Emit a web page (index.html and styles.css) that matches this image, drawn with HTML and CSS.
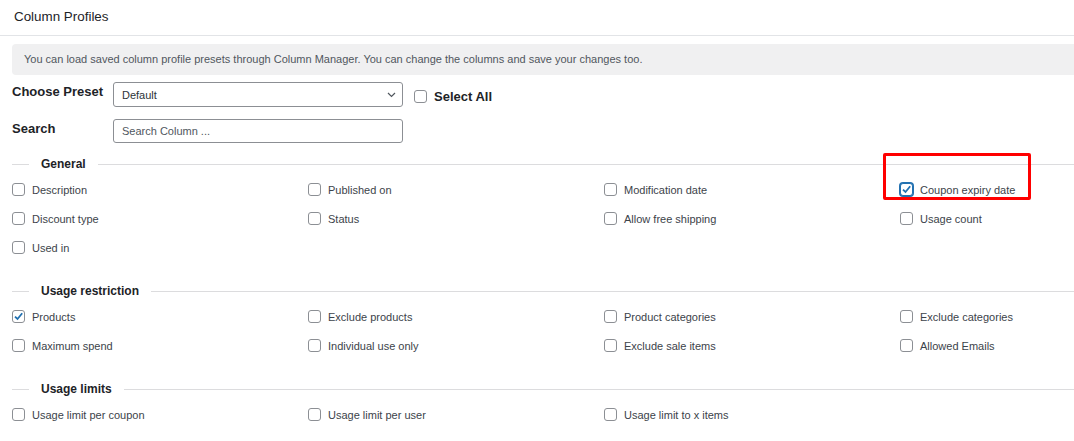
FILE: index.html
```html
<!DOCTYPE html>
<html>
<head>
<meta charset="utf-8">
<link rel="stylesheet" href="styles.css">
</head>
<body>
<div class="header">Column Profiles</div>
<div class="content">
  <div class="notice">You can load saved column profile presets through Column Manager. You can change the columns and save your changes too.</div>
  <div class="form-row">
    <div class="form-label">Choose Preset</div>
    <div class="select">
      <span>Default</span>
      <svg class="chev" width="9" height="6" viewBox="0 0 9 6"><path d="M1 1 L4.5 4.5 L8 1" fill="none" stroke="#50575e" stroke-width="1.2"/></svg>
    </div>
    <label class="select-all"><span class="cb"></span><span>Select All</span></label>
  </div>
  <div class="form-row second">
    <div class="form-label">Search</div>
    <div class="input">Search Column ...</div>
  </div>

  <div class="section first">
    <div class="sec-head"><span class="line short"></span><span class="sec-title">General</span><span class="line long"></span></div>
    <div class="grid">
      <label class="item"><span class="cb"></span>Description</label>
      <label class="item"><span class="cb"></span>Published on</label>
      <label class="item"><span class="cb"></span>Modification date</label>
      <label class="item marked"><span class="cb checked focus"><svg width="11" height="11" viewBox="0 0 11 11"><path d="M2 5.6 L4.5 8 L9.2 2.2" fill="none" stroke="#2271b1" stroke-width="1.8"/></svg></span>Coupon expiry date<span class="highlight"></span></label>
      <label class="item"><span class="cb"></span>Discount type</label>
      <label class="item"><span class="cb"></span>Status</label>
      <label class="item"><span class="cb"></span>Allow free shipping</label>
      <label class="item"><span class="cb"></span>Usage count</label>
      <label class="item"><span class="cb"></span>Used in</label>
    </div>
  </div>

  <div class="section">
    <div class="sec-head"><span class="line short"></span><span class="sec-title">Usage restriction</span><span class="line long"></span></div>
    <div class="grid">
      <label class="item"><span class="cb checked"><svg width="11" height="11" viewBox="0 0 11 11"><path d="M2 5.6 L4.5 8 L9.2 2.2" fill="none" stroke="#2271b1" stroke-width="1.8"/></svg></span>Products</label>
      <label class="item"><span class="cb"></span>Exclude products</label>
      <label class="item"><span class="cb"></span>Product categories</label>
      <label class="item"><span class="cb"></span>Exclude categories</label>
      <label class="item"><span class="cb"></span>Maximum spend</label>
      <label class="item"><span class="cb"></span>Individual use only</label>
      <label class="item"><span class="cb"></span>Exclude sale items</label>
      <label class="item"><span class="cb"></span>Allowed Emails</label>
    </div>
  </div>

  <div class="section">
    <div class="sec-head"><span class="line short"></span><span class="sec-title">Usage limits</span><span class="line long"></span></div>
    <div class="grid">
      <label class="item"><span class="cb"></span>Usage limit per coupon</label>
      <label class="item"><span class="cb"></span>Usage limit per user</label>
      <label class="item"><span class="cb"></span>Usage limit to x items</label>
    </div>
  </div>
</div>
</body>
</html>
```
FILE: styles.css
```css
* { box-sizing: border-box; }
html, body { margin: 0; padding: 0; background: #fff; }
body {
  font-family: "Liberation Sans", Arial, sans-serif;
  color: #1d2327;
  overflow: hidden;
}
.header {
  height: 36px;
  padding: 9px 0 0 14px;
  font-size: 13.4px;
  color: #1d2327;
  border-bottom: 1px solid #e2e4e7;
}
.content {
  padding-left: 12px;
}
.notice {
  margin-top: 8px;
  height: 31px;
  background: #f0f0f1;
  border-radius: 4px 0 0 4px;
  padding: 9px 0 0 12px;
  font-size: 11px;
  color: #50575e;
}
.form-row {
  display: flex;
  align-items: flex-start;
  margin-top: 7px;
}
.form-row.second { margin-top: 8px; }
.form-label {
  width: 101px;
  font-size: 13px;
  font-weight: bold;
  color: #1d2327;
  padding-top: 2px;
}
.select, .input {
  width: 290px;
  height: 25px;
  border: 1px solid #8c8f94;
  border-radius: 3px;
  font-size: 11px;
  display: flex;
  align-items: center;
  padding: 0 8px;
  color: #2c3338;
}
.input { height: 24px; color: #50575e; }
.select { justify-content: space-between; }
.chev { margin-right: -2px; }
.select-all {
  display: flex;
  align-items: center;
  margin-left: 11px;
  height: 29px;
  font-size: 13px;
  font-weight: bold;
  color: #1d2327;
  gap: 7px;
}
.cb {
  width: 13px;
  height: 13px;
  border: 1px solid #8c8f94;
  border-radius: 3px;
  background: #fff;
  flex: none;
  display: flex;
  align-items: center;
  justify-content: center;
}
.cb.focus {
  border-color: #2271b1;
  box-shadow: 0 0 0 1px #2271b1;
}
.section.first { margin-top: 11px; }
.section { margin-top: 19px; }
.sec-head {
  display: flex;
  align-items: center;
  height: 20px;
}
.line { height: 1px; background: #dcdcde; }
.line.short { width: 17px; }
.line.long { flex: 1; }
.sec-title {
  padding: 0 12px;
  font-size: 12px;
  font-weight: bold;
  color: #1d2327;
}
.grid {
  display: grid;
  grid-template-columns: 296px 296px 296px 1fr;
  margin-top: 1px;
}
.item {
  position: relative;
  height: 29px;
  display: flex;
  align-items: center;
  gap: 7px;
  font-size: 11px;
  color: #3c434a;
}
.highlight {
  position: absolute;
  left: -17px;
  top: -22px;
  width: 148px;
  height: 47px;
  border: 3px solid #ff0000;
  border-radius: 2px;
}
```
